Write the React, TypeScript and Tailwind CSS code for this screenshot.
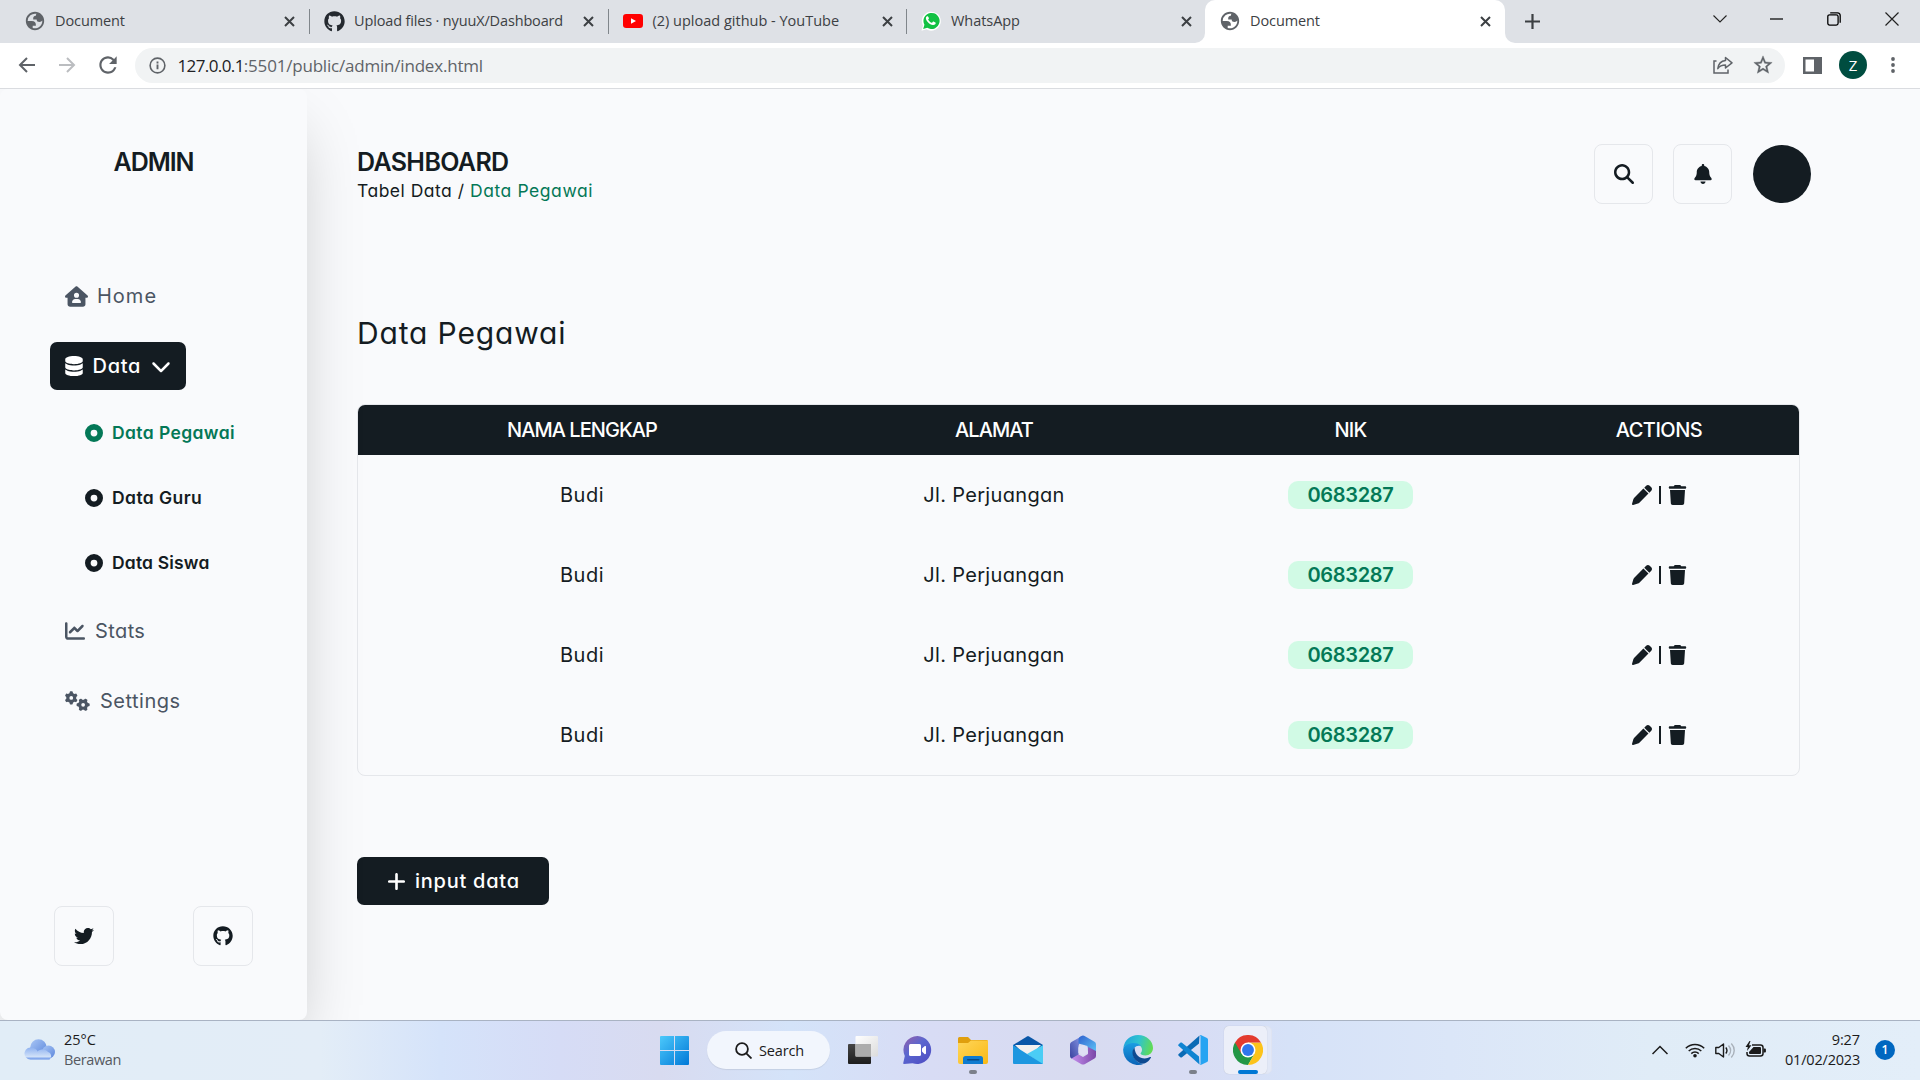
import type { ReactNode } from "react";
import {
  FaBell,
  FaChartLine,
  FaChevronDown,
  FaCircleDot,
  FaDatabase,
  FaGears,
  FaGithub,
  FaHouseUser,
  FaMagnifyingGlass,
  FaPen,
  FaPlus,
  FaTrash,
  FaTwitter,
} from "react-icons/fa6";

/* ---------- Browser chrome icons ---------- */

function Globe() {
  return (
    <svg viewBox="0 0 24 24" className="h-[22px] w-[22px] shrink-0" fill="#5f6368" fillRule="evenodd">
      <path d="M12 2C6.48 2 2 6.48 2 12s4.480 10 10 10 10-4.480 10-10S17.520 2 12 2zM4 12h4.400c3.407.022 4.922 1.730 4.543 5.127H9.488v2.470a8.004 8.004 0 0 0 10.498-8.083C19.327 12.504 18.332 13 17 13c-2.137 0-3.206-.916-3.206-2.750h-3.748c-.274-2.728.683-4.092 2.870-4.092 0-.975.327-1.597.811-1.970A8.004 8.004 0 0 0 4 12z" />
    </svg>
  );
}

function YouTube() {
  return (
    <svg viewBox="0 0 20 14" className="h-[14px] w-[20px] shrink-0">
      <rect width="20" height="14" rx="3.2" fill="#f00" />
      <path d="M8 4.2v5.6l5-2.8z" fill="#fff" />
    </svg>
  );
}

function WhatsApp() {
  return (
    <svg viewBox="0 0 24 24" className="h-[20px] w-[20px] shrink-0">
      <path d="M.6 23.6l1.7-6.1A11.4 11.4 0 1 1 6.600 22z" fill="#fff" />
      <path d="M2.600 21.600l1.500-5A9.700 9.700 0 1 1 7.500 20.200z" fill="#12c143" />
      <path
        d="M8.600 6.800c-.3-.6-.8-.6-1.200-.5-.8.2-1.600 1.200-1.500 2.600.2 2.600 4.300 7.400 8.400 8 1.700.2 3.200-.9 3.300-2.100.1-.6 0-.8-.4-1l-2.200-1.100c-.3-.1-.6-.1-.8.2l-.9 1.100c-.2.2-.4.3-.7.1-1.700-.7-3-2-3.900-3.600-.1-.3 0-.5.1-.6l.7-.9c.1-.2.1-.4 0-.6z"
        fill="#fff"
      />
    </svg>
  );
}

function Close() {
  return (
    <svg viewBox="0 0 11 11" className="h-[11px] w-[11px] shrink-0" stroke="#3c4043" strokeWidth="2">
      <path d="M1 1l9 9M10 1l-9 9" />
    </svg>
  );
}

function Tab({ className, icon, textClass, title }: { className: string; icon: ReactNode; textClass: string; title: string }) {
  return (
    <div className={`flex h-[42px] shrink-0 items-center ${className}`}>
      {icon}
      <span className={`text-[14.5px] leading-[20px] text-[#3c4043] ${textClass}`}>{title}</span>
      <span className="ml-auto">
        <Close />
      </span>
    </div>
  );
}

function Separator() {
  return <div className="mt-[9px] h-[25px] w-px shrink-0 bg-[#80868b]" />;
}

function TabStrip() {
  return (
    <div className="flex h-[43px] bg-[#dee1e6]">
      <Tab className="w-[309px] pr-[14px] pl-[24px]" icon={<Globe />} textClass="ml-[9px] tracking-[-0.1px]" title="Document" />
      <Separator />
      <Tab
        className="w-[298px] pr-[14px] pl-[14px]"
        icon={<FaGithub className="h-[21px] w-[21px] shrink-0 text-[#24292f]" />}
        textClass="ml-[9px] tracking-[-0.15px]"
        title="Upload files · nyuuX/Dashboard"
      />
      <Separator />
      <Tab className="w-[297px] pr-[13px] pl-[14px]" icon={<YouTube />} textClass="ml-[9.500px]" title="(2) upload github - YouTube" />
      <Separator />
      <Tab className="w-[287px] pr-[2px] pl-[14px]" icon={<WhatsApp />} textClass="ml-[10px] tracking-[-0.05px]" title="WhatsApp" />
      <div className="h-[43px] w-[11px] bg-white">
        <div className="h-full w-full rounded-br-[10px] bg-[#dee1e6]" />
      </div>
      <div className="h-[43px] w-[300px] bg-[#dee1e6]">
        <div className="h-full w-full rounded-t-[10px] bg-white">
          <Tab className="w-[300px] pr-[14px] pl-[14px]" icon={<Globe />} textClass="ml-[9px] tracking-[-0.1px]" title="Document" />
        </div>
      </div>
      <div className="h-[43px] w-[20px] bg-white">
        <div className="h-full w-full rounded-bl-[10px] bg-[#dee1e6]" />
      </div>
      <svg viewBox="0 0 15 15" className="mt-[14px] h-[15px] w-[15px] shrink-0" stroke="#3c4043" strokeWidth="2.2">
        <path d="M7.500 0v15M0 7.500h15" />
      </svg>
      <div className="ml-auto flex h-[37px] items-center pr-[21.500px]">
        <svg viewBox="0 0 14 8" className="h-[8px] w-[14px]" fill="none" stroke="#222" strokeWidth="1.1">
          <path d="M.5.5L7 7 13.500.5" />
        </svg>
        <svg viewBox="0 0 13 2" className="ml-[43px] h-[2px] w-[13px]">
          <rect width="13" height="1.200" y=".4" fill="#000" />
        </svg>
        <svg viewBox="0 0 14 14" className="ml-[44px] h-[14px] w-[14px]" fill="none" stroke="#000" strokeWidth="1.300">
          <rect x=".8" y="2.800" width="10.300" height="10.300" rx="1.800" />
          <path d="M3.200.8h7.300a2.800 2.800 0 0 1 2.700 2.800v7.200" />
        </svg>
        <svg viewBox="0 0 14 14" className="ml-[44px] h-[14px] w-[14px]" stroke="#222" strokeWidth="1.200">
          <path d="M.5.5l13 13M13.500.5l-13 13" />
        </svg>
      </div>
    </div>
  );
}

function Toolbar() {
  return (
    <div className="flex h-[46px] items-center border-b border-[#dadce0] bg-white pr-[25.500px] pb-px pl-[18px]">
      <svg viewBox="0 0 17 16" className="h-[16px] w-[17px]" fill="none" stroke="#5f6368" strokeWidth="2">
        <path d="M17 8H2M9 1L2 8l7 7" />
      </svg>
      <svg viewBox="0 0 17 16" className="ml-[24px] h-[16px] w-[17px]" fill="none" stroke="#bbbdc0" strokeWidth="2">
        <path d="M0 8h15M8 1l7 7-7 7" />
      </svg>
      <svg viewBox="0 0 24 24" className="ml-[19px] h-[26px] w-[26px]" fill="#5f6368">
        <path d="M17.650 6.350A7.958 7.958 0 0 0 12 4c-4.420 0-7.990 3.580-7.990 8s3.570 8 7.990 8c3.730 0 6.840-2.550 7.730-6h-2.080A5.990 5.990 0 0 1 12 18c-3.310 0-6-2.690-6-6s2.690-6 6-6c1.660 0 3.140.69 4.220 1.780L13 11h7V4l-2.350 2.350z" />
      </svg>
      <div className="ml-[14px] flex h-[35px] w-[1650px] items-center rounded-full bg-[#f1f3f4] pr-[11.500px] pl-[14px]">
        <svg viewBox="0 0 18 18" className="h-[17px] w-[17px]" fill="none" stroke="#5f6368">
          <circle cx="9" cy="9" r="7.800" strokeWidth="1.700" />
          <path d="M9 8v5M9 4.800v2" strokeWidth="2" />
        </svg>
        <span className="mt-[1px] ml-[11.500px] text-[17px] leading-[24px] tracking-[-0.6px] text-[#202124]">127.0.0.1</span>
        <span className="mt-[1px] text-[17px] leading-[24px] tracking-[-0.2px] text-[#5f6368]">:5501/public/admin/index.html</span>
        <svg viewBox="0 0 20 18" className="ml-auto h-[18px] w-[20px]" fill="none" stroke="#5f6368" strokeWidth="1.500">
          <path d="M3.500 5H1v12h14v-3.500" />
          <path d="M12.500 1.500l6.500 5.300-6.500 5.200V9c-3.500 0-6 1.100-7.700 3.600C5.300 8.500 8 5 12.500 4.500z" strokeLinejoin="round" />
        </svg>
        <svg viewBox="0 0 24 24" className="ml-[19px] h-[22px] w-[22px]" fill="#5f6368" stroke="#5f6368" strokeWidth=".4">
          <path d="M22 9.240l-7.190-.62L12 2 9.190 8.630 2 9.240l5.460 4.730L5.820 21 12 17.270 18.180 21l-1.630-7.030L22 9.240zM12 15.400l-3.760 2.270 1-4.280-3.320-2.880 4.380-.38L12 6.100l1.710 4.040 4.380.38-3.320 2.880 1 4.280L12 15.400z" />
        </svg>
      </div>
      <svg viewBox="0 0 19 17" className="ml-[18px] h-[17px] w-[19px]">
        <path d="M0 0h19v17H0zM2.500 2.500v12H11v-12z" fill="#5f6368" fillRule="evenodd" />
      </svg>
      <div className="ml-[17px] flex h-[28px] w-[28px] items-center justify-center rounded-full bg-[#004d40] text-[15px] leading-[20px] text-white">Z</div>
      <svg viewBox="0 0 4 16" className="ml-auto h-[16px] w-[4px]" fill="#5f6368">
        <circle cx="2" cy="2" r="1.900" />
        <circle cx="2" cy="8" r="1.900" />
        <circle cx="2" cy="14" r="1.900" />
      </svg>
    </div>
  );
}

/* ---------- Admin page ---------- */

function SubItem({ label, className, textClass }: { label: string; className: string; textClass: string }) {
  return (
    <li className={`flex h-[65px] items-center pl-[85px] text-[17.5px] font-semibold ${className}`}>
      <FaCircleDot className="h-[18px] w-[18px]" />
      <span className={`ml-[9px] leading-[28px] ${textClass}`}>{label}</span>
    </li>
  );
}

const squareClass = "flex h-[60px] items-center justify-center rounded-[8px] border border-[#e5e7eb] text-[20px] text-[#141c22]";

function Sidebar() {
  return (
    <aside className="relative flex h-full w-[307px] shrink-0 flex-col rounded-[8px] bg-[#f9fafc] pt-[58px] pb-[54px] shadow-[0_31px_62px_-15px_rgba(0,0,0,0.25)]">
      <h1 className="text-center text-[25px] leading-[30px] font-semibold tracking-[-1.06px]">ADMIN</h1>
      <nav className="mt-[95px] text-[20px] leading-[30px] text-[#4b5563]">
        <div className="flex h-[48px] items-center pl-[65px]">
          <FaHouseUser className="h-[21px] w-[23px]" />
          <span className="ml-[9px] tracking-[1px]">Home</span>
        </div>
        <div className="mt-[22px] ml-[50px] flex h-[48px] w-[136px] items-center rounded-[7px] bg-[#141c22] pl-[15px] font-medium text-white">
          <FaDatabase className="h-[20px] w-[18px]" />
          <span className="ml-[9.500px] tracking-[0.7px]">Data</span>
          <FaChevronDown className="ml-[10px] h-[20px] w-[20px]" />
        </div>
        <ul className="mt-[10px]">
          <SubItem label="Data Pegawai" className="text-[#047857]" textClass="tracking-[0.4px]" />
          <SubItem label="Data Guru" className="text-[#141c22]" textClass="tracking-[0.42px]" />
          <SubItem label="Data Siswa" className="text-[#141c22]" textClass="tracking-[0.17px]" />
        </ul>
        <div className="mt-[12px] flex h-[48px] items-center pl-[65px]">
          <FaChartLine className="h-[20px] w-[20px]" />
          <span className="ml-[10px] tracking-[0.4px]">Stats</span>
        </div>
        <div className="mt-[22px] flex h-[48px] items-center pl-[65px]">
          <FaGears className="h-[20px] w-[25px]" />
          <span className="ml-[10px] tracking-[0.49px]">Settings</span>
        </div>
      </nav>
      <div className="mt-auto flex justify-between px-[54px]">
        <a className={`w-[60px] ${squareClass}`}>
          <FaTwitter />
        </a>
        <a className={`w-[60px] ${squareClass}`}>
          <FaGithub />
        </a>
      </div>
    </aside>
  );
}

const columns = "grid grid-cols-[448px_376px_337px_280px] justify-items-center";
const employees = [0, 1, 2, 3].map((id) => ({ id, name: "Budi", address: "Jl. Perjuangan", nik: "0683287" }));

function Main() {
  return (
    <main className="flex flex-1 flex-col pt-[55px] pl-[50px]">
      <header className="flex h-[60px] w-[1454px]">
        <div className="pt-[3px]">
          <h2 className="text-[25px] leading-[30px] font-semibold tracking-[-0.63px]">DASHBOARD</h2>
          <p className="text-[17.5px] leading-[28px]">
            <span className="tracking-[0.5px]">Tabel Data / </span>
            <span className="tracking-[0.57px] text-[#047857]">Data Pegawai</span>
          </p>
        </div>
        <div className="ml-auto flex gap-[20px]">
          <button className={`w-[59px] ${squareClass}`}>
            <FaMagnifyingGlass />
          </button>
          <button className={`w-[59px] ${squareClass}`}>
            <FaBell />
          </button>
          <div className="mt-[1px] ml-[1px] h-[58px] w-[58px] rounded-full bg-[#141c22]" />
        </div>
      </header>
      <h3 className="mt-[109px] text-[30px] leading-[40px] tracking-[0.85px]">Data Pegawai</h3>
      <section className="mt-[51px] h-[372px] w-[1443px] overflow-hidden rounded-[8px] border border-[#e5e7eb] text-[20px] leading-[30px]">
        <div className={`${columns} h-[50px] bg-[#141c22] pt-[10px] font-medium text-white`}>
          <span className="tracking-[-0.95px]">NAMA LENGKAP</span>
          <span className="tracking-[-0.91px]">ALAMAT</span>
          <span className="tracking-[-0.8px]">NIK</span>
          <span className="tracking-[-0.5px]">ACTIONS</span>
        </div>
        {employees.map((e) => (
          <div key={e.id} className={`${columns} h-[80px] items-center`}>
            <span className="tracking-[0.5px]">{e.name}</span>
            <span className="tracking-[0.33px]">{e.address}</span>
            <span className="flex h-[28px] w-[125px] items-center justify-center rounded-[10px] bg-[#d1fae5] font-semibold tracking-[-0.33px] text-[#047857]">
              {e.nik}
            </span>
            <span className="flex items-center">
              <FaPen className="h-[20px] w-[20px]" />
              <span className="mx-[7px] h-[18px] w-[2px] bg-[#141c22]" />
              <FaTrash className="h-[20px] w-[19px]" />
            </span>
          </div>
        ))}
      </section>
      <button className="mt-[81px] flex h-[48px] w-[192px] items-center rounded-[7px] bg-[#141c22] pl-[29px] text-[20px] leading-[30px] font-medium text-white">
        <FaPlus className="h-[21px] w-[21px]" />
        <span className="ml-[8px] tracking-[0.75px]">input data</span>
      </button>
    </main>
  );
}

/* ---------- Taskbar ---------- */

function WeatherIcon() {
  return (
    <svg viewBox="0 0 31 21" className="mb-[2px] h-[21px] w-[31px]">
      <defs>
        <linearGradient id="cloudBack" x1="0" y1="0" x2="1" y2="1">
          <stop offset="0" stopColor="#a9c6f5" />
          <stop offset="1" stopColor="#5b86dc" />
        </linearGradient>
        <linearGradient id="cloudFront" x1="0" y1="0" x2="0" y2="1">
          <stop offset="0" stopColor="#8fb2f0" />
          <stop offset=".75" stopColor="#cfe0f8" />
          <stop offset="1" stopColor="#5f8de6" />
        </linearGradient>
      </defs>
      <circle cx="14.500" cy="8.500" r="8.300" fill="url(#cloudBack)" />
      <circle cx="24.500" cy="13" r="6.500" fill="url(#cloudBack)" />
      <path d="M6.500 20.500a6 6 0 1 1 2.600-11.400c2 .3 4 2 4.400 3.500 3-3 8.500-2.500 10.500.4 3 .5 4.500 5 1.500 7.500z" fill="url(#cloudFront)" />
    </svg>
  );
}

function StartIcon() {
  return (
    <svg viewBox="0 0 29 29" className="ml-[5px] h-[29px] w-[29px]">
      <defs>
        <linearGradient id="start" gradientUnits="userSpaceOnUse" x1="0" y1="0" x2="29" y2="29">
          <stop offset="0" stopColor="#4cc9fb" />
          <stop offset="1" stopColor="#0078d7" />
        </linearGradient>
      </defs>
      <path d="M1 0h13v14H0V1a1 1 0 0 1 1-1zM15 0h13a1 1 0 0 1 1 1v13H15zM0 15h14v14H1a1 1 0 0 1-1-1zM15 15h14v13a1 1 0 0 1-1 1H15z" fill="url(#start)" />
    </svg>
  );
}

function TaskViewIcon() {
  return (
    <svg viewBox="0 0 30 28" className="ml-[18px] h-[28px] w-[30px]">
      <defs>
        <linearGradient id="tvDark" x1="0" y1="0" x2="0" y2="1">
          <stop offset="0" stopColor="#454545" />
          <stop offset="1" stopColor="#1d1d1d" />
        </linearGradient>
        <linearGradient id="tvLight" x1="0" y1="0" x2="1" y2="1">
          <stop offset="0" stopColor="#fff" />
          <stop offset="1" stopColor="#dcdcdc" />
        </linearGradient>
      </defs>
      <rect y="8" width="23" height="20" rx="1" fill="url(#tvDark)" />
      <rect x="7.500" width="22.500" height="20.500" rx="1" fill="url(#tvLight)" />
      <rect x="7.500" y="8" width="15.500" height="12.500" fill="#adadad" />
    </svg>
  );
}

function ChatIcon() {
  return (
    <svg viewBox="0 0 29 28" className="ml-[25px] h-[28px] w-[29px]">
      <defs>
        <linearGradient id="chat" x1="0" y1="0" x2=".8" y2="1">
          <stop offset="0" stopColor="#9a5fa8" />
          <stop offset=".45" stopColor="#5b67cf" />
          <stop offset="1" stopColor="#4f4fc4" />
        </linearGradient>
      </defs>
      <path d="M14.500 0a14 14 0 1 1-5 27.200L1 28c-.7 0-1-.6-.7-1.200L1.800 20A14 14 0 0 1 14.500 0z" fill="url(#chat)" />
      <rect x="6" y="8" width="12" height="12" rx="1.500" fill="#fff" />
      <path d="M19 12.500l2.500-2.300a.9.900 0 0 1 1.500.7v6.300a.9.900 0 0 1-1.500.7L19 15.600z" fill="#fff" />
    </svg>
  );
}

function FolderIcon() {
  return (
    <svg viewBox="0 0 30 27" className="h-[27px] w-[30px]">
      <defs>
        <linearGradient id="folder" x1="0" y1="0" x2="1" y2="1">
          <stop offset="0" stopColor="#ffd65a" />
          <stop offset="1" stopColor="#f9b916" />
        </linearGradient>
      </defs>
      <path d="M0 1.500A1.500 1.500 0 0 1 1.500 0H10l3 3h15.500A1.500 1.500 0 0 1 30 4.500V12H0z" fill="#e09f0d" />
      <path d="M0 6h10l3-2.500h17V25a2 2 0 0 1-2 2H2a2 2 0 0 1-2-2z" fill="url(#folder)" />
      <path d="M5 27v-5.500A2.500 2.500 0 0 1 7.500 19h15a2.500 2.500 0 0 1 2.500 2.500V27z" fill="#0f7bd0" />
      <rect x="9" y="22" width="12.500" height="1.500" rx=".7" fill="#084a86" />
    </svg>
  );
}

function MailIcon() {
  return (
    <svg viewBox="0 0 30 28" className="ml-[25px] h-[28px] w-[30px]">
      <path d="M0 9L14 .4a2 2 0 0 1 2 0L30 9v5H0z" fill="#0a57a8" />
      <path d="M2 9h26L17 20h-4z" fill="#f3f1f0" />
      <path d="M30 9v18a1 1 0 0 1-1 1L14 17.900z" fill="#4bcdf5" />
      <path d="M0 9l30 19H1a1 1 0 0 1-1-1z" fill="#1d97e0" />
    </svg>
  );
}

function OfficeIcon() {
  return (
    <svg viewBox="0 0 28 30" className="ml-[26px] h-[30px] w-[28px]">
      <defs>
        <linearGradient id="of1" x1="0" y1="1" x2="1" y2="0">
          <stop offset="0" stopColor="#39429e" />
          <stop offset="1" stopColor="#8a9bea" />
        </linearGradient>
        <linearGradient id="of2" x1="0" y1="0" x2="1" y2="1">
          <stop offset="0" stopColor="#2f62cf" />
          <stop offset="1" stopColor="#5fc4f6" />
        </linearGradient>
        <linearGradient id="of3" x1="0" y1="0" x2="1" y2="0">
          <stop offset="0" stopColor="#c590ee" />
          <stop offset="1" stopColor="#7b47a8" />
        </linearGradient>
      </defs>
      <path d="M13 1L2.500 7A3 3 0 0 0 1 9.500V21a3 3 0 0 0 4.500 2.600L9.500 21V11z" fill="url(#of1)" />
      <path d="M12 1.200a4 4 0 0 1 4 0l9.500 5.500A3 3 0 0 1 27 9.300V17l-8.500-1.500V11L9.500 8.500V4.500c0-1.600 1.200-2.600 2.500-3.300z" fill="url(#of2)" />
      <path d="M27 16v5a3 3 0 0 1-1.500 2.500L16 29a4 4 0 0 1-4 0l-9.500-5.500 7-4 4.500 2.500 5-3V12z" fill="url(#of3)" />
      <path d="M14 9.800l4.700 2.700v5.200L14 20.400l-4.600-2.700v-5.200z" fill="#dfe0f4" />
    </svg>
  );
}

function EdgeIcon() {
  return (
    <svg viewBox="0 0 30 30" className="ml-[26px] h-[30px] w-[30px]">
      <defs>
        <linearGradient id="edgeTop" x1="0" y1=".3" x2="1" y2=".5">
          <stop offset="0" stopColor="#1fa3dc" />
          <stop offset=".5" stopColor="#2fc3d0" />
          <stop offset="1" stopColor="#62dc52" />
        </linearGradient>
        <linearGradient id="edgeBody" x1="0" y1="0" x2="0" y2="1">
          <stop offset="0" stopColor="#1b9de2" />
          <stop offset="1" stopColor="#0b64b8" />
        </linearGradient>
      </defs>
      <path d="M.3 13C1.500 5 7.500 0 15 0c8.500 0 15 6 15 13 0 4.500-3.500 7.500-7.500 7.500-3.500 0-5-1.300-5-2 0-.7 1.500-1.300 1.500-4 0-3-3-5.800-7.500-5.800C6.500 8.700 2 10.500.3 13z" fill="url(#edgeTop)" />
      <path d="M.2 14C1 10.500 5.500 8 11 8c3 0 5.500 1.200 7 3-5-1.500-8 2-8 6.500 0 6 4.500 11.500 11 11.300A15 15 0 0 1 .2 14z" fill="url(#edgeBody)" />
      <path d="M11.500 12.500c-3.500 3.500-2 10 1.500 13 2.500 2.300 6 3.800 9 2.800 2.500-1 4.800-3.500 5.900-5.500.3-.6-.2-1-.8-.7-6.500 3.400-15.100.4-15.600-9.600z" fill="#0d4a91" />
    </svg>
  );
}

function VsCodeIcon() {
  return (
    <svg viewBox="0 0 30 30" className="h-[30px] w-[30px]">
      <path d="M21 8.500L4 22.300c-.5.400-1.200.4-1.700 0L.7 20.800a1.300 1.300 0 0 1 0-1.900L21.500.5z" fill="#0a6ab5" />
      <path d="M21 21.500L4 7.700c-.5-.4-1.200-.4-1.700 0L.7 9.200a1.300 1.300 0 0 0 0 1.900l20.800 18.400z" fill="#0f84d2" />
      <path d="M21.500.4c.5-.4 1.200-.4 1.800-.2l5.700 2.700c.6.300 1 1 1 1.600v21c0 .6-.4 1.300-1 1.600l-5.700 2.700c-.6.200-1.300.2-1.800-.2.600.3 1-.1 1-.9V1.300c0-.8-.4-1.200-1-.9z" fill="#27a4f2" />
    </svg>
  );
}

function ChromeIcon() {
  return (
    <svg viewBox="0 0 48 48" className="h-[30px] w-[30px]">
      <path d="M24 24L3.200 12A24 24 0 0 0 24 48l10.400-18z" fill="#239746" />
      <path d="M24 12h20.800A24 24 0 0 1 24 48l10.400-18z" fill="#fcc31b" />
      <path d="M3.200 12L13.600 30 24 24V12h20.800A24 24 0 0 0 3.200 12z" fill="#e33b2e" />
      <circle cx="24" cy="24" r="12" fill="#fff" />
      <circle cx="24" cy="24" r="9.500" fill="#2f76ec" />
    </svg>
  );
}

function TrayIcons() {
  return (
    <>
      <svg viewBox="0 0 16 10" className="h-[10px] w-[16px]" fill="none" stroke="#1b1b1b" strokeWidth="1.500">
        <path d="M.5 9L8 1.500 15.500 9" />
      </svg>
      <svg viewBox="0 0 20 16" className="ml-[17px] h-[16px] w-[20px]" fill="none" stroke="#1b1b1b" strokeWidth="1.500">
        <path d="M.8 6.300a13 13 0 0 1 18.400 0M3.700 9a9 9 0 0 1 12.600 0M6.300 11.600a5.300 5.300 0 0 1 7.400 0" />
        <circle cx="10" cy="13.800" r="1.800" fill="#1b1b1b" stroke="none" />
      </svg>
      <svg viewBox="0 0 21 17" className="ml-[10px] h-[17px] w-[21px]" fill="none" stroke="#1b1b1b" strokeWidth="1.400">
        <path d="M.8 5.500h3L8.500 2v13L3.800 11.500h-3z" strokeLinejoin="round" />
        <path d="M10.800 5.500c1.400 1.800 1.400 4.200 0 6" />
        <path d="M13.500 3.500c2.600 3 2.600 7 0 10M16.300 1.500c3.900 4.200 3.900 9.800 0 14" stroke="#a9b1ba" />
      </svg>
      <svg viewBox="0 0 21 17" className="mb-[2px] ml-[9px] h-[17px] w-[21px]">
        <path d="M7 4h8.500A2.500 2.500 0 0 1 18 6.500v6a2.500 2.500 0 0 1-2.500 2.500H4.500A2.500 2.500 0 0 1 2 12.500V11" fill="none" stroke="#1b1b1b" strokeWidth="1.500" />
        <path d="M8.500 6h6.500a1 1 0 0 1 1 1v5a1 1 0 0 1-1 1H5a1 1 0 0 1-1-1v-1z" fill="#1b1b1b" />
        <path d="M18.500 7.500h1.200c.7 0 1.200.5 1.200 1v2c0 .6-.5 1-1.200 1h-1.200z" fill="#1b1b1b" />
        <path d="M4.500 0L.5 6h2.300L2 10l4.500-5.700H4L5.500 0z" fill="#1b1b1b" />
      </svg>
    </>
  );
}

function Taskbar() {
  return (
    <footer className="flex h-[60px] items-center border-t border-[#a9b3c3] bg-[linear-gradient(90deg,#e1edf7_0px,#e3edf7_320px,#d5e3fa_440px,#d6dcf6_560px,#d8dbf0_660px,#d4e3f9_790px,#d8dcf5_930px,#d8dbf0_1080px,#d8dcf4_1180px,#d6e2f8_1290px,#dbe6f8_1450px,#e0ecf7_1650px,#e3eef9_1920px)] pr-[25px] pb-px pl-[24px] text-[#1b1b1b]">
      <div className="flex w-[631px] items-center">
        <WeatherIcon />
        <div className="mb-[1px] ml-[9px] text-[14.5px] leading-[20px]">
          <div>25°C</div>
          <div className="tracking-[-0.4px] text-[#55595f]">Berawan</div>
        </div>
      </div>
      <StartIcon />
      <div className="ml-[18px] flex h-[38px] w-[123px] items-center rounded-full bg-[#f2f6fd] pl-[28px] shadow-[0_1px_1px_rgba(0,0,0,0.08)]">
        <svg viewBox="0 0 17 17" className="h-[17px] w-[17px]" fill="none" stroke="#1b1b1b" strokeWidth="1.800">
          <circle cx="7" cy="7" r="5.900" />
          <path d="M11.300 11.300l5.200 5.200" />
        </svg>
        <span className="mt-[1px] ml-[7px] text-[14.5px] leading-[20px] tracking-[-0.15px]">Search</span>
      </div>
      <TaskViewIcon />
      <ChatIcon />
      <div className="relative ml-[26px] flex h-[59px] items-center">
        <FolderIcon />
        <span className="absolute bottom-[6px] left-[11px] h-[4px] w-[8px] rounded-full bg-[#7b808a]" />
      </div>
      <MailIcon />
      <OfficeIcon />
      <EdgeIcon />
      <div className="relative ml-[25px] flex h-[59px] items-center">
        <VsCodeIcon />
        <span className="absolute bottom-[6px] left-[11px] h-[4px] w-[8px] rounded-full bg-[#7b808a]" />
      </div>
      <div className="ml-[16px] flex h-[48px] w-[48px] rounded-[5px] border border-[#dfe4f2] bg-[#e2e8f7]">
        <div className="relative -mt-px -ml-px flex h-[48px] w-[43px] items-center rounded-[5px] bg-[#eceff9] pl-[9px] shadow-[0_0_1px_rgba(0,0,0,0.2)]">
          <ChromeIcon />
          <span className="absolute bottom-0 left-[14px] h-[4px] w-[20px] rounded-full bg-[#0078d4]" />
        </div>
      </div>
      <div className="ml-auto flex items-center">
        <TrayIcons />
        <div className="mb-[1px] ml-[19px] text-right text-[14.5px] leading-[20px]">
          <div className="tracking-[-0.1px]">9:27</div>
          <div className="tracking-[-0.2px]">01/02/2023</div>
        </div>
        <div className="ml-[15px] flex h-[20px] w-[20px] items-center justify-center rounded-full bg-[#0067c0] text-[12px] leading-[20px] font-semibold text-white">1</div>
      </div>
    </footer>
  );
}

export default function App() {
  return (
    <div className="flex h-[1080px] w-[1920px] flex-col overflow-hidden whitespace-nowrap font-['Open_Sans',sans-serif]">
      <TabStrip />
      <Toolbar />
      <div className="flex h-[931px] overflow-hidden bg-[#f9fafc] font-['Inter',sans-serif] text-[#141c22] [font-feature-settings:'cv11']">
        <Sidebar />
        <Main />
      </div>
      <Taskbar />
    </div>
  );
}
